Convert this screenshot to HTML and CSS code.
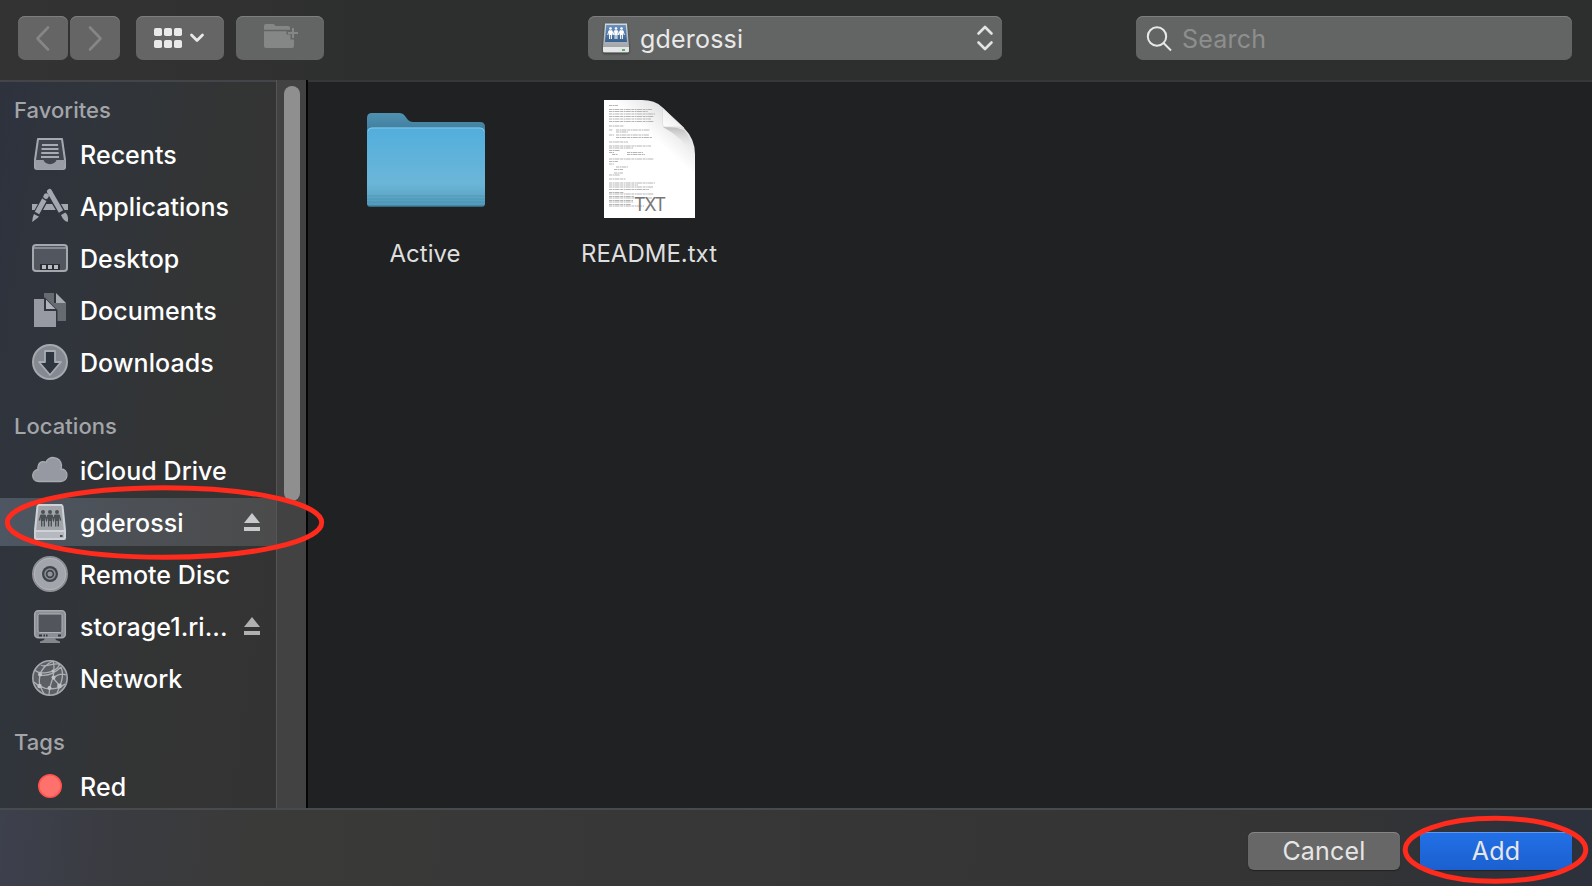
FILE: index.html
```html
<!DOCTYPE html>
<html lang="en">
<head>
<meta charset="utf-8">
<title>Open</title>
<link rel="stylesheet" href="styles.css">
</head>
<body>
<div class="dialog">
  <header class="toolbar">
    <button class="control nav"><svg width="50" height="44" viewBox="0 0 50 44"><path d="M30 11.500 19.500 22.500 30 33.500"/></svg></button>
    <button class="control nav forward"><svg width="50" height="44" viewBox="0 0 50 44"><path d="M20 11.500 30.500 22.500 20 33.500"/></svg></button>
    <button class="control view"><svg width="88" height="44" viewBox="0 0 88 44">
      <g fill="#e9e9e9"><rect x="18" y="12" width="8" height="8" rx="1.800"/><rect x="28" y="12" width="8" height="8" rx="1.800"/><rect x="38" y="12" width="8" height="8" rx="1.800"/><rect x="18" y="24" width="8" height="8" rx="1.800"/><rect x="28" y="24" width="8" height="8" rx="1.800"/><rect x="38" y="24" width="8" height="8" rx="1.800"/></g>
      <path d="M55.500 19 61 24.500 66.500 19" fill="none" stroke="#e9e9e9" stroke-width="2.800" stroke-linecap="round" stroke-linejoin="round"/></svg></button>
    <button class="control new-folder"><svg width="88" height="44" viewBox="0 0 88 44">
      <path fill="#858787" d="M28 10a2 2 0 0 1 2-2h7a2 2 0 0 1 2 1.500l.5.500H52a2 2 0 0 1 2 2v1.800H28zM28 15.300h22.500v3.200h4v5H58V30a2 2 0 0 1-2 2H30a2 2 0 0 1-2-2z"/>
      <path d="M57 12v10M52 17h10" stroke="#858787" stroke-width="2"/></svg></button>
    <div class="control path">
      <svg class="drive" width="28" height="32" viewBox="0 0 28 32">
        <defs><linearGradient id="dv" x2="0" y2="1"><stop stop-color="#d5d9dc"/><stop offset="1" stop-color="#96999b"/></linearGradient><linearGradient id="ds" x2="0" y2="1"><stop stop-color="#6b90bd"/><stop offset="1" stop-color="#38618f"/></linearGradient></defs>
        <path d="M3 1.500h22L27 24v5q0 1.500-1.500 1.500h-23Q1 30.500 1 29v-5z" fill="url(#dv)"/>
        <path d="M1 25h26v4q0 1.300-1.500 1.300h-23Q1 30.300 1 29z" fill="#e4e6e7"/><path d="M4.200 3h19.600L25 20H3z" fill="url(#ds)"/>
        <g fill="#fff"><circle cx="8.500" cy="6.500" r="1.300"/><circle cx="14" cy="6.500" r="1.300"/><circle cx="19.500" cy="6.500" r="1.300"/></g>
        <path d="M6.900 8.300h3.200v4.700H6.900zM12.400 8.300h3.200v4.700h-3.200zM17.900 8.300h3.200v4.700h-3.200z" fill="#fff"/>
        <path d="m7 8.700-1.300 4.200M10 8.700l1.200 4.200 1.300-4.200M15.500 8.700l1.200 4.200L18 8.700M21 8.700l1.300 4.200M7.600 12v5M9.400 12v5M13.100 12v5M14.900 12v5M18.600 12v5M20.400 12v5" fill="none" stroke="#fff"/>
        <rect x="20" y="27" width="3" height="2" fill="#62ae60"/></svg>
      <span class="path-name">gderossi</span>
      <svg class="stepper" width="18" height="28" viewBox="0 0 18 28"><path d="M2.500 9.500 9 3 15.500 9.500M2.500 18.500 9 25 15.500 18.500"/></svg>
    </div>
    <label class="control search"><svg width="28" height="28" viewBox="0 0 28 28"><circle cx="12" cy="12.500" r="9.200"/><path d="m18.500 19 7.500 7.500"/></svg><span>Search</span></label>
  </header>

  <div class="body">
    <nav class="sidebar">
      <h2>Favorites</h2>
      <div class="item"><svg class="icon" viewBox="0 0 36 36"><path d="M6 3h24l3 21v7q0 2-2 2H5q-2 0-2-2v-7z" fill="#42464f" stroke="#a5a8af" stroke-width="2" stroke-linejoin="round"/><path d="M2.500 24h9c1.500 5.500 11.500 5.500 13 0h9l-1.500 9.500H4z" fill="#999ca4"/><path d="M10 9h16M9.500 13h17M9.300 17h17.400M9 21h18" stroke="#a8abb1" stroke-width="2"/></svg><span>Recents</span></div>
      <div class="item"><svg class="icon" viewBox="0 0 36 36"><path d="M0 16h36v6H0z" fill="#a4a7ae"/><path d="m15 7-12 22M17 3l14 24" stroke="#303641" stroke-width="7.500"/><g stroke="#a4a7ae" stroke-width="5" fill="none"><path d="m14.300 7.800-.4.700" stroke-linecap="round"/><path d="m12.700 11-7.700 14M17.600 3.800 29 23.500" /><path d="m17.500 3.500.2.300" stroke-linecap="round"/></g><path d="m2 26 5 2.800L.3 34Q0 30 2 26zM29 27l4.500-2.500Q37 28 35.700 34 31.500 33 29 27z" fill="#a4a7ae"/><path d="m10.500 10 5 3" stroke="#303641" stroke-width="1.200"/></svg><span>Applications</span></div>
      <div class="item"><svg class="icon" viewBox="0 0 36 36"><rect x="1" y="5" width="34" height="26" rx="3" fill="#52565e" stroke="#a4a7ae" stroke-width="2"/><path d="M2 8h32" stroke="#a4a7ae" stroke-width="1.300"/><path d="M8 24h20v6H8z" fill="#292c32"/><path d="M10 25h4v4h-4zM16 25h4v4h-4zM22 25h4v4h-4z" fill="#b9bbc0"/></svg><span>Desktop</span></div>
      <div class="item"><svg class="icon" viewBox="0 0 36 36"><path d="M12 1h10v10h12v18H12z" fill="#666a71"/><path d="m24 1 10 10H24z" fill="#a6a9af"/><path d="M2 7h10l.5-2L25.500 18v17H2z" fill="#30353f"/><path d="M2 7h10v12h12v16H2z" fill="#979aa2"/><path d="m14 7.500 9.500 9.500H14z" fill="#b0b2b8"/></svg><span>Documents</span></div>
      <div class="item"><svg class="icon" viewBox="0 0 36 36"><circle cx="18" cy="18" r="17" fill="#858991" stroke="#a5a8af" stroke-width="2"/><path d="M13 7h10v11h6L18 31 7 18h6z" fill="#303640" stroke="#a9acb2" stroke-width="1.800" stroke-linejoin="round"/></svg><span>Downloads</span></div>
      <h2>Locations</h2>
      <div class="item"><svg class="icon" viewBox="0 0 36 36"><path d="M7 29.500C-1.500 29.500-1 18 6 17.500 5 11 10 8 14 10.500 16 3.500 28 3.500 29.500 13c0 1.500 0 3-.5 4 8 0 8 12.500-.5 12.500z" fill="#9699a1" stroke="#a8abb1" stroke-width="1.300"/></svg><span>iCloud Drive</span></div>
      <div class="item selected"><svg class="icon" viewBox="0 0 36 36"><path d="M6 0h24l1.500 2 2.500 24v8q0 2-2 2H4q-2 0-2-2v-8L4.500 2z" fill="#ced1d5"/><path d="M6.500 2h23l2.300 24H4.200z" fill="#a1a5aa"/><path d="M4 28h28v5q0 1-1 1H5q-1 0-1-1z" fill="#b5b9bf"/><g fill="#4b5057"><circle cx="11" cy="8" r="2"/><circle cx="18" cy="8" r="2"/><circle cx="25" cy="8" r="2"/><path d="M8.800 10.500h4.400V17H8.800zM15.800 10.500h4.400V17h-4.400zM22.800 10.500h4.400V17h-4.400z"/></g><path d="m9 11-1.700 5.500M13 11l1.500 5L16 11M20 11l1.500 5 1.500-5M27 11l1.700 5.500M9.700 16v6.500M12.300 16v6.500M16.700 16v6.500M19.300 16v6.500M23.700 16v6.500M26.300 16v6.500" fill="none" stroke="#4b5057" stroke-width="1.400"/><path d="M28 31h2.500v2H28z" fill="#474d55"/></svg><span>gderossi</span><svg class="eject" viewBox="0 0 16 18"><path d="m8 0 8 10H0zM0 14h16v4H0z"/></svg></div>
      <div class="item"><svg class="icon" viewBox="0 0 36 36"><circle cx="18" cy="18" r="17" fill="#a2a5ab" stroke="#8d9096" stroke-width="2"/><circle cx="18" cy="18" r="15.800" fill="none" stroke="#b3b5ba"/><circle cx="18" cy="18" r="8" fill="#3e424a"/><circle cx="18" cy="18" r="5" fill="none" stroke="#8d9096" stroke-width="1.500"/><circle cx="18" cy="18" r="2.500" fill="#90939a"/></svg><span>Remote Disc</span></div>
      <div class="item"><svg class="icon" viewBox="0 0 36 36"><rect x="2.700" y="2.700" width="30.600" height="27" rx="3.500" fill="#8c8f95" stroke="#a5a8ad" stroke-width="1.500"/><rect x="6" y="6" width="24" height="18.500" rx="1.500" fill="#52555c" stroke="#b0b2b7"/><path d="M7 26.500h3v2H7zM11.500 26.500h1.500v2h-1.500zM14 26.500h1.500v2H14zM26 26.500h3v2h-3z" fill="#30343b"/><path d="M13 30h10l1 2 4 1.500V35H8v-1.500l4-1.500z" fill="#84878c"/></svg><span>storage1.ri...</span><svg class="eject" viewBox="0 0 16 18"><path d="m8 0 8 10H0zM0 14h16v4H0z"/></svg></div>
      <div class="item"><svg class="icon" viewBox="0 0 36 36"><circle cx="18" cy="18" r="17.200" fill="#5c6066" stroke="#a5a8ad" stroke-width="1.600"/><g fill="none" stroke="#aeb0b5" stroke-width="1.300"><path d="M9 5C11 8 20 3 27 4M3 10c3 4 20 5 25-6M8 15C9 10 14 4 21 1M8 15c-1 5-1 8 0 11 6 4 18 4 25-2M2 22c4 3 4 4 6 4M8 15c6 1 14-1 21-8M21 1c2 5 1 10 0 17l7 8c2-6 4-12 1-19M21 18c-2 5-4 8-4 17M21 18c5-4 9-5 13-3M8 26l4 8M28 26l-3 7"/></g><g fill="#bfc1c5"><circle cx="8" cy="14.500" r="2"/><circle cx="21.500" cy="17.500" r="2"/><circle cx="7.500" cy="26" r="2.200"/><circle cx="17.500" cy="28" r="2"/><circle cx="27.500" cy="26" r="2.400"/><circle cx="21" cy="11" r="1.500"/></g></svg><span>Network</span></div>
      <h2>Tags</h2>
      <div class="item"><svg class="icon" viewBox="0 0 36 36"><circle cx="18" cy="18" r="11.200" fill="#ff716c" stroke="#ff534d" stroke-width="1.600"/></svg><span>Red</span></div>
    </nav>
    <div class="track"><div class="thumb"></div></div>
    <main class="files">
      <figure class="file">
        <svg width="120" height="120" viewBox="0 0 120 120">
          <defs><linearGradient id="ff" x2="0" y2="1"><stop stop-color="#52aedd"/><stop offset=".7" stop-color="#6bb6d8"/><stop offset=".85" stop-color="#60a9ca"/><stop offset="1" stop-color="#5098b8"/></linearGradient><linearGradient id="fb" x2="0" y2="1"><stop stop-color="#5091b2"/><stop offset="1" stop-color="#346f8c"/></linearGradient></defs>
          <path d="M1 18q0-5 5-5h27q4 0 6 3l3 4q2 2 5 2h67q5 0 5 5v16H1z" fill="url(#fb)"/>
          <path d="M1 32.500q0-5 5-5h108q5 0 5 5v71q0 3-3 3H4q-3 0-3-3z" fill="url(#ff)"/>
          <path d="M2 31.500q0-3.500 4-3.500h108q4 0 4 3.500" fill="none" stroke="#82c5e5"/>
          <path d="M1 96h118M1 99h118M1 102h118" stroke="#428aaa" stroke-opacity=".55"/>
          <path d="M2 105.800h116" stroke="#3d819f"/></svg>
        <figcaption>Active</figcaption>
      </figure>
      <figure class="file">
        <svg width="120" height="120" viewBox="0 0 120 120">
          <defs><linearGradient id="pg" x1=".62" y1="0" x2=".3" y2=".45"><stop stop-color="#dedede"/><stop offset=".55" stop-color="#fff"/></linearGradient><linearGradient id="curl" x1="0" y1="1" x2=".5" y2=".4"><stop stop-color="#fff"/><stop offset="1" stop-color="#eee"/></linearGradient><linearGradient id="sh" x2="0" y2="1"><stop stop-color="#bbb"/><stop offset="1" stop-color="#fff" stop-opacity="0"/></linearGradient></defs>
          <path d="M14 0h38q13 0 20 7l22 21q11 11 11 26v64H14z" fill="url(#pg)"/>
          <path d="M73 27q10-1 21 3 8 9 9 25-10-17-30-28z" fill="url(#sh)"/>
          <path d="M72.500 8v16q0 3 3 3H90q2 0 4 1z" fill="url(#curl)" stroke="#d9d9d9" stroke-width=".7"/>
          <g class="print">
            <path d="M19 5.500h9M19 9.500h43M19 11.500h39M19 14h46M19 16.500h45M19 19h42M19 21.500h45M19 26h15M19 30h4M26 30h34M26 32h12M19 35h5M26 35h33M26 37.500h36M19 42h19M19 46h42M19 48h24M19 50.500h11M19 52.500h5M37 52.500h16M22 54.500h6M37 54.500h18M19 59h45M19 61.500h9M19 64h5M26 67h12M24 69.500h9M24 73h9M19 75h11M19 79h17M19 83h46M19 85h29M19 87h44M19 89.500h40M19 92.500h15M19 94h45M19 96.500h25M19 98h43M19 100.500h24M19 102h24M19 104.500h22M19 106h35"/>
          </g>
          <text class="kind" x="60" y="111" text-anchor="middle" textLength="32">TXT</text></svg>
        <figcaption>README.txt</figcaption>
      </figure>
    </main>
  </div>

  <footer class="footer">
    <button class="push">Cancel</button>
    <button class="push primary">Add</button>
  </footer>

  <svg class="marks" width="1592" height="886" viewBox="0 0 1592 886"><ellipse cx="164.500" cy="522.500" rx="157.200" ry="34.800"/><ellipse cx="1495.500" cy="849.800" rx="90.300" ry="31.500"/></svg>
</div>
</body>
</html>
```
FILE: styles.css
```css
* { box-sizing: border-box; }
body {
  margin: 0;
  background: #202123;
  font-family: Inter, "Liberation Sans", sans-serif;
  font-size: 25px;
  color: #fff;
}
button { font: inherit; color: inherit; border: 0; padding: 0; }
svg { display: block; flex: none; }
.dialog {
  position: relative;
  width: 1592px;
  height: 886px;
  display: flex;
  flex-direction: column;
  overflow: hidden;
}

.toolbar {
  flex: none;
  display: flex;
  height: 80px;
  padding: 16px 20px 0 18px;
  background: linear-gradient(90deg, #333 0, #313131 220px, #2d2f2e 360px);
}
.control {
  flex: none;
  height: 44px;
  border-radius: 7px;
  background: #636564;
  box-shadow: inset 0 1px #7d7f7e;
}
.nav { width: 50px; background: #656565; }
.nav path { fill: none; stroke: #868686; stroke-width: 2.6; stroke-linecap: round; stroke-linejoin: round; }
.forward { margin-left: 2px; }
.view { width: 88px; margin-left: 16px; background: #656565; }
.new-folder { width: 88px; margin-left: 12px; }
.path {
  display: flex;
  align-items: center;
  width: 414px;
  margin-left: auto;
  padding: 0 8px 0 14px;
  color: #e9e9e9;
}
.drive { margin-right: 10px; filter: drop-shadow(0 1px 1px #333); }
.path-name { flex: 1; padding-top: 2px; letter-spacing: .2px; }
.stepper { fill: none; stroke: #e3e3e3; stroke-width: 2.6; stroke-linecap: round; stroke-linejoin: round; }
.search {
  display: flex;
  align-items: center;
  gap: 9px;
  width: 436px;
  margin-left: 134px;
  padding-left: 9px;
  color: #8d8f8e;
}
.search span { padding-top: 2px; letter-spacing: .2px; }
.search svg { fill: none; stroke: #e8e8e8; stroke-width: 2; }

.body { flex: none; display: flex; height: 728px; }
.sidebar {
  display: flex;
  flex-direction: column;
  width: 276px;
  padding-top: 10px;
  border-top: 2px solid #434549;
  background: linear-gradient(98deg, #2e323d 0, #30353c 25%, #333434 60%, #343333 100%);
  overflow: hidden;
}
.sidebar h2 {
  flex: none;
  margin: 0;
  padding: 1px 0 0 14px;
  font-size: 22px;
  font-weight: 500;
  line-height: 35px;
  letter-spacing: .05px;
  color: #a3a5a9;
}
.item + h2 { padding-top: 21px; }
.item {
  flex: none;
  display: flex;
  align-items: center;
  height: 48px;
  margin: 2px 0;
  padding: 0 16px 0 32px;
  font-weight: 500;
}
.item span { flex: 1; padding-top: 2px; white-space: nowrap; letter-spacing: .05px; }
.icon { width: 36px; height: 36px; margin-right: 12px; }
.selected { background: linear-gradient(90deg, #4d5662, #4c5055 50%, #4b4b4b); }
.eject { width: 16px; height: 18px; fill: #afb0b0; }
.selected .eject { fill: #c9cacb; }
.track {
  width: 32px;
  padding: 6px 0 0 7px;
  border-left: 1px solid #555;
  border-right: 2px solid #050505;
  background: #424242;
}
.thumb { width: 16px; height: 415px; border-radius: 8px; background: #8f8f8f; }
.files {
  flex: 1;
  display: flex;
  align-items: flex-start;
  padding: 18px 0 0 6px;
  border-top: 2px solid #363738;
  background: #202123;
}
.file {
  display: flex;
  flex-direction: column;
  align-items: center;
  width: 224px;
  margin: 0;
  font-size: 24px;
  color: #dedede;
}
.file figcaption { margin-top: 19px; padding-right: 2px; line-height: 30px; }
.print { fill: none; stroke: #adadad; stroke-width: .9; stroke-dasharray: 3 .6 1.5 .4 5 .7; }
.kind { font-family: Inter, sans-serif; font-size: 18px; fill: #777; }

.footer {
  flex: 1;
  display: flex;
  justify-content: flex-end;
  gap: 20px;
  padding: 22px 20px 0 0;
  border-top: 2px solid #484b4e;
  background: linear-gradient(95deg, #3d404d 0, #3a3b40 8%, #3a3a39 16%, #373737 40%, #343434 84%, #2d313b 96%);
}
.push {
  width: 152px;
  height: 38px;
  border-radius: 6px;
  background: #676767;
  box-shadow: inset 0 1px #858585, 0 1px 1px #222;
  color: #e6e6e6;
  letter-spacing: .2px;
}
.primary {
  background: linear-gradient(#2270e6, #1b60d0);
  box-shadow: inset 0 1px #5b98f0, 0 1px 1px #222;
}
.marks { position: absolute; inset: 0; pointer-events: none; fill: none; stroke: #ff2b1c; stroke-width: 5; }
```
